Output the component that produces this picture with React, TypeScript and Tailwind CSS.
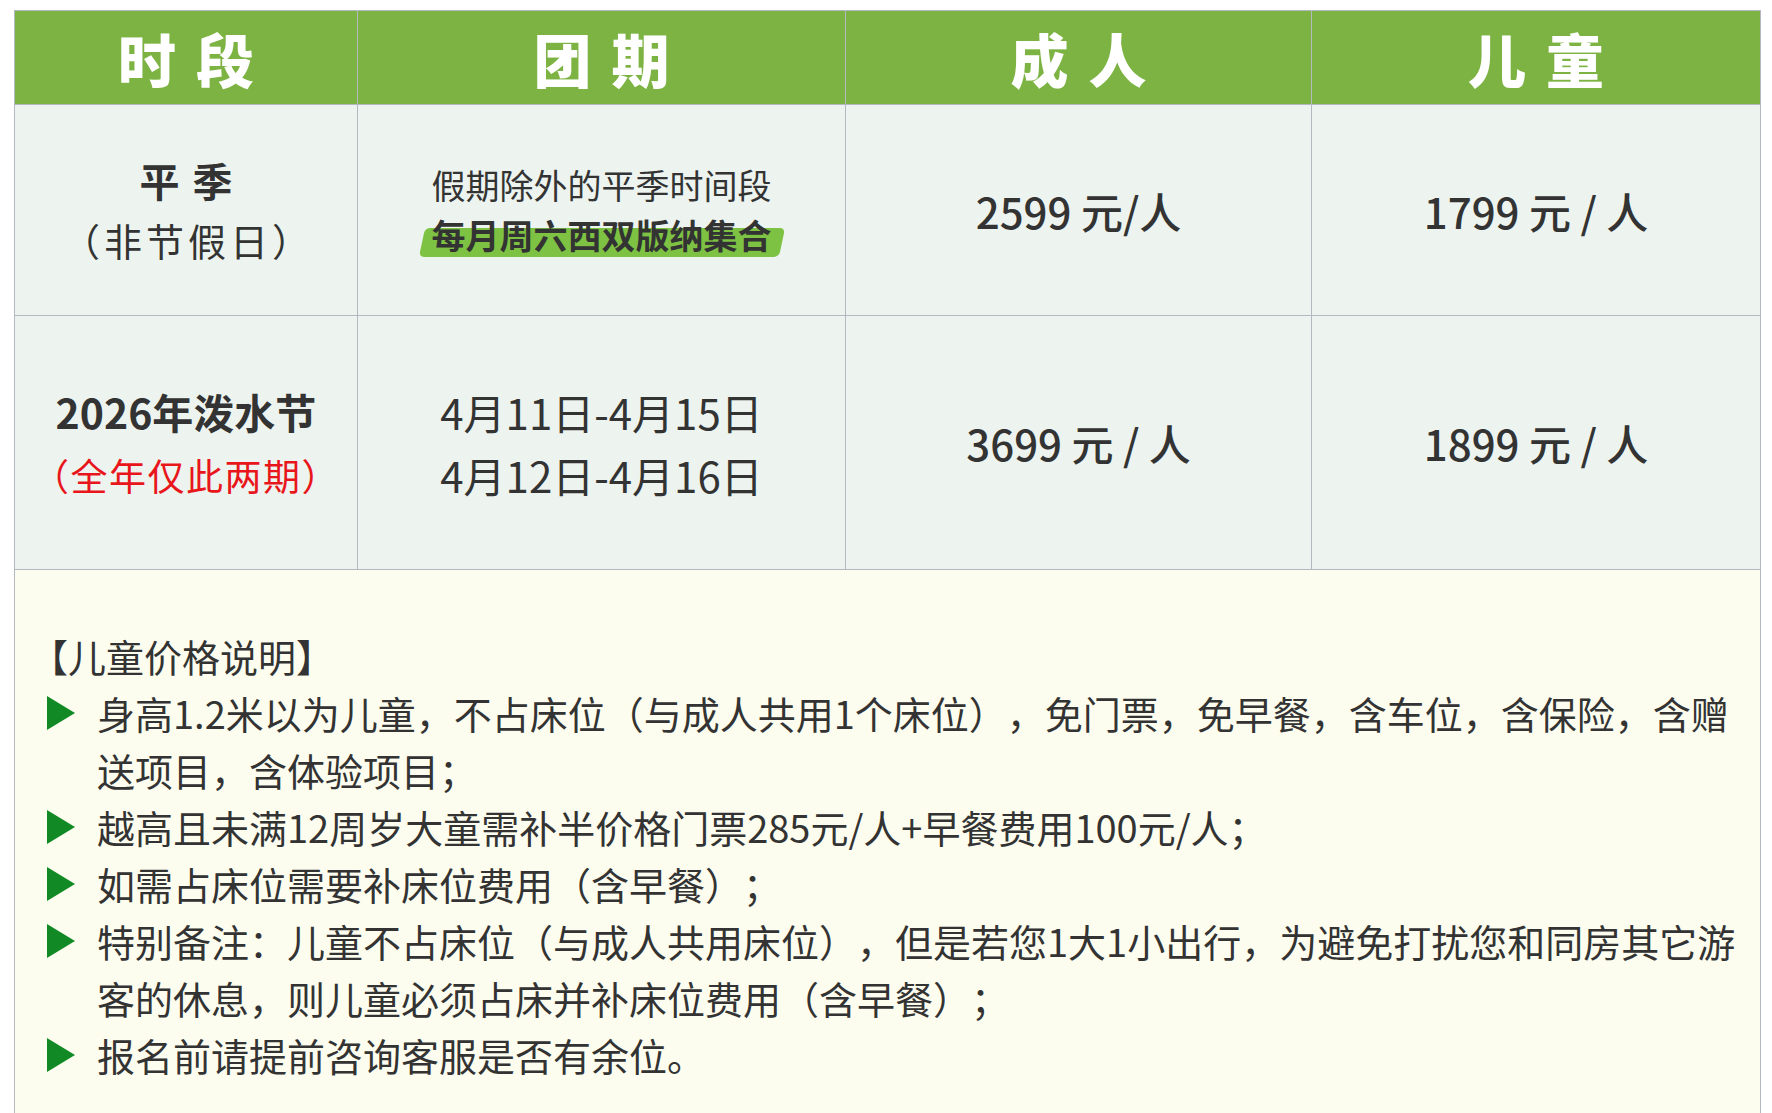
import { Fragment } from 'react';

const font = { fontFamily: '"Noto Sans CJK SC", "Noto Sans", sans-serif' };

const headers = [['时', '段'], ['团', '期'], ['成', '人'], ['儿', '童']];

const notes = [
  '身高1.2米以为儿童，不占床位（与成人共用1个床位），免门票，免早餐，含车位，含保险，含赠送项目，含体验项目；',
  '越高且未满12周岁大童需补半价格门票285元/人+早餐费用100元/人；',
  '如需占床位需要补床位费用（含早餐）；',
  '特别备注：儿童不占床位（与成人共用床位），但是若您1大1小出行，为避免打扰您和同房其它游客的休息，则儿童必须占床并补床位费用（含早餐）；',
  '报名前请提前咨询客服是否有余位。',
];

function Triangle() {
  return (
    <svg width="28" height="34" viewBox="0 0 28 34" className="shrink-0">
      <polygon points="0,0 28,17 0,34" fill="#118a26" />
    </svg>
  );
}

export default function App() {
  const cell = 'flex flex-col items-center justify-center border-r border-b border-[#b4b8c0] bg-[#edf3ef] text-[#333]';

  return (
    <div className="min-h-screen bg-white pt-[10px] pl-[14px] [text-spacing-trim:space-all]" style={font}>
      <div className="w-[1747px] border-x border-t border-[#b4b8c0]">
        <div className="grid grid-cols-[343px_488px_466px_448px]">
          {headers.map((h, i) => (
            <div
              key={i}
              className={`flex h-[94px] items-center justify-center gap-[20px] border-b border-[#b4b8c0] bg-[#7cb342] text-[58px] font-black leading-none text-white ${i < 3 ? 'border-r' : ''}`}
            >
              <span>{h[0]}</span>
              <span>{h[1]}</span>
            </div>
          ))}

          {/* 平季 */}
          <div className={`${cell} h-[211px]`}>
            <div className="flex gap-[13px] text-[40px] font-bold leading-[60px]">
              <span>平</span>
              <span>季</span>
            </div>
            <div className="pl-[4px] text-[38px] leading-[60px] tracking-[4px]">（非节假日）</div>
          </div>
          <div className={`${cell} h-[211px]`}>
            <div className="text-[34px] leading-[50px]">假期除外的平季时间段</div>
            <div className="relative text-[34px] font-bold leading-[50px]">
              <span className="absolute left-[-10px] right-[-10px] bottom-[3px] h-[29px] -skew-x-12 rounded-[5px] bg-[#7dc243]" />
              <span className="relative">每月周六西双版纳集合</span>
            </div>
          </div>
          <div className={`${cell} h-[211px] text-[42px] font-medium`}>2599 元/人</div>
          <div className={`${cell} h-[211px] border-r-0 text-[42px] font-medium`}>1799 元 / 人</div>

          {/* 泼水节 */}
          <div className={`${cell} h-[254px]`}>
            <div className="text-[41px] font-bold leading-[64px]">2026年泼水节</div>
            <div className="text-[37px] leading-[64px] tracking-[1.5px] text-[#e8161b]">（全年仅此两期）</div>
          </div>
          <div className={`${cell} h-[254px] text-[42px] leading-[63px]`}>
            <div>4月11日-4月15日</div>
            <div>4月12日-4月16日</div>
          </div>
          <div className={`${cell} h-[254px] text-[42px] font-medium`}>3699 元 / 人</div>
          <div className={`${cell} h-[254px] border-r-0 text-[42px] font-medium`}>1899 元 / 人</div>
        </div>

        <div className="bg-[#fcfdef] pt-[57px] pb-[60px] pl-[32px] pr-[15px] text-[38px] leading-[57px] text-[#333]">
          <div className="-ml-[17px]">【儿童价格说明】</div>
          {notes.map((n, i) => (
            <Fragment key={i}>
              <div className="flex gap-[22px]">
                <div className="flex h-[57px] items-center">
                  <Triangle />
                </div>
                <div className="flex-1">{n}</div>
              </div>
            </Fragment>
          ))}
        </div>
      </div>
    </div>
  );
}
